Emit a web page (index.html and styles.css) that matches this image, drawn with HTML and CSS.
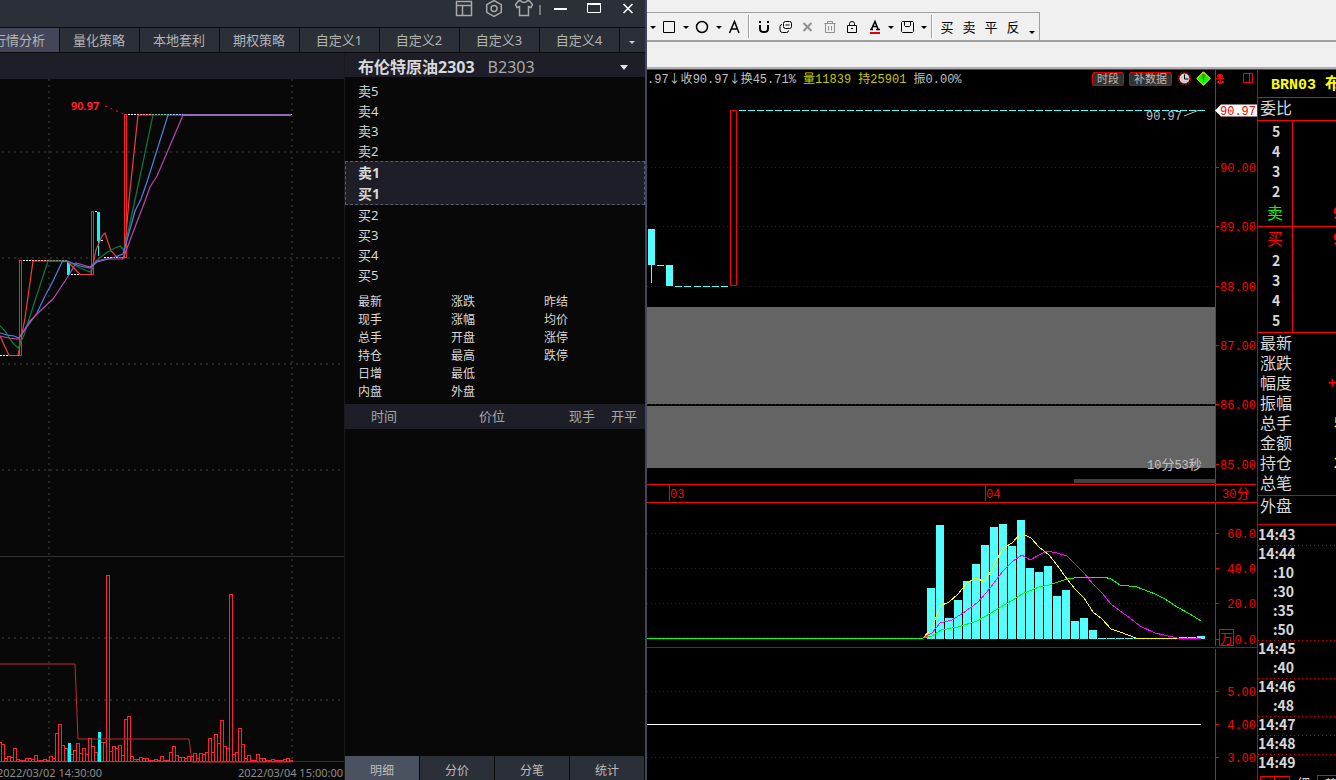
FILE: index.html
```html
<!DOCTYPE html>
<html lang="zh-CN">
<head>
<meta charset="utf-8">
<title>布伦特原油2303</title>
<link rel="stylesheet" href="styles.css">
</head>
<body>
<div class="desktop">
  <section class="trader">
    <header class="titlebar">
      <button class="tool" aria-label="布局"><svg width="20" height="20" viewBox="0 0 20 20"><path d="M2.500 1.500h15v14h-15zM2.500 5.500h15M8.500 5.500v10"/></svg></button>
      <button class="tool" aria-label="设置"><svg width="20" height="20" viewBox="0 0 20 20"><path d="M10 .5l7.300 4.200v7.600L10 16.500l-7.300-4.200V4.700z"/><circle cx="10" cy="8.500" r="3"/></svg></button>
      <button class="tool" aria-label="皮肤"><svg width="20" height="20" viewBox="0 0 20 20"><path d="M6.500 .5c1 2.500 6 2.500 7 0l2 .5 3 3.500-1.500 3-2.500-1v9h-9v-9l-2.500 1-1.500-3 3-3.500z"/></svg></button>
      <span class="tool-sep"></span>
      <button class="win" aria-label="最小化"><svg width="20" height="20" viewBox="0 0 20 20"><path d="M4 9h13"/></svg></button>
      <button class="win" aria-label="最大化"><svg width="20" height="20" viewBox="0 0 20 20"><path class="thin" d="M3.500 4v8.500h13V4"/><path d="M3 4h14"/></svg></button>
      <button class="win" aria-label="关闭"><svg width="20" height="20" viewBox="0 0 20 20"><path class="cross" d="M5.500 4l9 9M14.500 4l-9 9"/></svg></button>
    </header>
    <nav class="tabs">
      <button class="tab first active">行情分析</button><button class="tab">量化策略</button><button class="tab">本地套利</button><button class="tab">期权策略</button><button class="tab">自定义1</button><button class="tab">自定义2</button><button class="tab">自定义3</button><button class="tab">自定义4</button><button class="tab more" aria-label="更多"><i class="caret"></i></button>
    </nav>
    <div class="trader-body">
      <div class="kline">
        <div class="kline-head"></div>
        <svg class="plot" viewBox="0 79 344 701" preserveAspectRatio="xMaxYMin meet">
          <g class="grid-left">
            <path d="M49 79V761M292 79V761"/>
            <path d="M2 152H341M2 258H341M2 364H341M2 470H341M2 638H341M2 700H341"/>
          </g>
          <g class="candles">
            <rect x="19.500" y="260.500" width="2" height="95"/>
            <rect x="91.500" y="211.500" width="2" height="63"/>
            <rect x="124.500" y="114.500" width="2" height="143"/>
          </g>
          <path class="cyan-fill" d="M67 262h3v13h-3zM97 212h3v29h-3zM98 241h1v15h-1z"/>
          <path class="white-dash" d="M0 355.500H19M23 260.500H67M71 274.500H91M95 211.500h2M101 240.500h2M104 257.500h20M128 114.500H292"/>
          <g class="ma">
            <polyline class="ma-red" points="0,336 9,355.500 18,355.500 25,318 33,261 67,261 75,269 80,274.500 91,274.500 96,250 102,236 105,233 111,251 117,257 124,258 129,200 138,115 153,115"/>
            <polyline class="ma-green" points="0,326 5,331 12,342 18,348 24,335 30,316 48,261 67,261 80,268 90,272 96,261 106,253 115,248 120,246 124,250 135,200 153,115 168,115"/>
            <polyline class="ma-blue" points="0,333 7,335 14,336 19,338 24,331 37,313 44,298 53,281 62,262 67,261 80,266 90,268 97,262 105,260 115,257 123,254 129,233 135,211 141,199 147,182 168,115 183,115"/>
            <polyline class="ma-purple" points="0,336 9,338 18,339 23,332 30,321 39,312 53,299 63,284 69,275 76,263 90,267 97,261 105,259 123,259 132,235 145,201 150,187 157,176 163,162 183,115"/>
          </g>
          <path class="ma-flat" d="M183 115H291"/>
          <path class="pointer-red" d="M105 106L124 114"/>
          <text class="peak" x="71" y="110">90.97</text>
          <path class="pane-line" d="M0 556.500H344M0 761.500H344"/>
          <g id="volume-left"></g>
          <polyline class="interest" points="0,664 75,664 78,739 189,739 192,762 291,762"/>
          <text class="date" x="-3" y="777">2022/03/02 14:30:00</text>
          <text class="date" x="343" y="777" text-anchor="end">2022/03/04 15:00:00</text>
        </svg>
      </div>
      <aside class="quote">
        <div class="quote-head"><strong>布伦特原油2303</strong><span>B2303</span><i class="caret big"></i></div>
        <div class="ladder">
          <div>卖5</div><div>卖4</div><div>卖3</div><div>卖2</div>
          <div class="best"><div>卖1</div><div>买1</div></div>
          <div>买2</div><div>买3</div><div>买4</div><div>买5</div>
        </div>
        <div class="stats">
          <span>最新</span><span>涨跌</span><span>昨结</span>
          <span>现手</span><span>涨幅</span><span>均价</span>
          <span>总手</span><span>开盘</span><span>涨停</span>
          <span>持仓</span><span>最高</span><span>跌停</span>
          <span>日增</span><span>最低</span><span></span>
          <span>内盘</span><span>外盘</span><span></span>
        </div>
        <table class="deals"><thead><tr><th class="c-time">时间</th><th class="c-price">价位</th><th class="c-vol">现手</th><th class="c-side">开平</th></tr></thead></table>
        <nav class="subtabs"><button class="active">明细</button><button>分价</button><button>分笔</button><button>统计</button></nav>
      </aside>
    </div>
  </section>

  <section class="station">
    <div class="menu-strip"></div>
    <div class="toolbar-row">
      <div class="toolbar">
        <button class="drop" aria-label="线条"><i class="caret dark"></i></button>
        <button class="ico" aria-label="矩形"><svg width="20" height="20" viewBox="0 0 20 20"><path d="M4.500 4.500h11v11h-11z"/></svg></button>
        <button class="drop" aria-label="更多矩形"><i class="caret dark"></i></button>
        <button class="ico" aria-label="圆形"><svg width="20" height="20" viewBox="0 0 20 20"><circle cx="10" cy="10" r="5.500" stroke-width="1.500"/></svg></button>
        <button class="drop" aria-label="更多圆形"><i class="caret dark"></i></button>
        <button class="ico" aria-label="文字"><svg width="20" height="20" viewBox="0 0 20 20"><path stroke-width="1.500" d="M4.500 16L9.500 4.500 14 16M6 12h7"/></svg></button>
        <span class="bar"></span>
        <button class="ico" aria-label="磁吸"><svg width="20" height="20" viewBox="0 0 20 20"><path stroke-width="2" d="M6 4v2M14 4v2M6 8v4q0 3 4 3t4-3V8"/></svg></button>
        <button class="ico" aria-label="复制"><svg width="20" height="20" viewBox="0 0 20 20"><path d="M7.500 6.500q0-2 2-2h4q2 0 2 2v3q0 2-2 2h-4q-2 0-2-2zM9.500 8h4M6 7.500q-2 0-2 2v3.500q0 2.500 2.500 2.500h4q2 0 2-2"/></svg></button>
        <button class="ico dim" aria-label="删除"><svg width="20" height="20" viewBox="0 0 20 20"><path stroke-width="2" d="M5.500 6l8 8M13.500 6l-8 8"/></svg></button>
        <button class="ico dim" aria-label="清空"><svg width="20" height="20" viewBox="0 0 20 20"><path d="M4.500 6.500h11M7.500 6V4.500h5V6M5.500 7v8.500h9V7M8.500 9v4.500M11.500 9v4.500"/></svg></button>
        <button class="ico" aria-label="锁定"><svg width="20" height="20" viewBox="0 0 20 20"><path d="M5.500 8.500h9v7h-9zM7.500 8V6.500q0-2 2.500-2t2.500 2V8M9 11.500h2"/></svg></button>
        <button class="ico" aria-label="字体颜色"><svg width="20" height="20" viewBox="0 0 20 20"><path d="M6 12.500h3M12 12.500h4M7.500 12L11 4.500 14 12M8.500 9.500h4.500" stroke-width="1.500"/><path class="underline" d="M6 16h10"/></svg></button>
        <button class="drop" aria-label="更多颜色"><i class="caret dark"></i></button>
        <button class="ico" aria-label="保存"><svg width="20" height="20" viewBox="0 0 20 20"><path d="M5.500 4.500h10l1 1v9l-1 1h-10l-1-1v-9zM7.500 5v3.500l1 1h4l1-1V5"/></svg></button>
        <button class="drop" aria-label="更多保存"><i class="caret dark"></i></button>
        <span class="bar"></span>
        <button class="ico word">买</button><button class="ico word">卖</button><button class="ico word">平</button><button class="ico word">反</button>
        <button class="drop low" aria-label="更多"><i class="caret dark"></i></button>
      </div>
    </div>
    <div class="address-strip"></div>
    <div class="station-body">
      <div class="chart">
        <div class="chart-head">
          <p class="ohlc">.97<b>↓收</b>90.97<b>↓换</b>45.71% <em><b>量</b>11839 <b>持</b>25901</em> <b>振</b>0.00%</p>
          <button class="badge">时段</button><button class="badge">补数据</button>
          <svg class="clock" width="15" height="15" viewBox="0 0 15 15"><circle class="ring" cx="7.500" cy="7.500" r="5.500"/><circle class="face" cx="7.500" cy="7.500" r="5"/><path d="M7.500 3.500v4.500h4"/></svg>
          <svg class="gem" width="15" height="15" viewBox="0 0 15 15"><path class="gem-face" d="M7.500 .8l6.700 6.700-6.700 6.700L.8 7.500z"/><path class="gem-pin" d="M7.500 3v8M6 4h3v3H6z"/></svg>
          <div class="axis-head">
            <svg width="10" height="12" viewBox="0 0 10 12"><path class="red-fill" d="M2 1h4v1h1v2H5v1h3v1H5v3h1V8h2v2H6v1H3v-1H1V8h2v1h1V6H0V5h3V4H1V2h1z"/></svg>
            <svg width="12" height="14" viewBox="0 0 12 14"><path class="red-line" d="M1.500 1.500h9v9h-9zM7.500 1.500v9"/></svg>
          </div>
        </div>
        <svg class="plot" viewBox="647 87 610 693" preserveAspectRatio="xMaxYMin meet">
          <path class="grid-right" d="M647 167.500H1215M647 226.500H1215M647 286.500H1215M647 533.500H1215M647 568.500H1215M647 603.500H1215M647 639.500H1215M647 691.500H1215M647 757.500H1215"/>
          <path class="shade" d="M647 307H1215V404H647zM647 406H1215V468H647z"/>
          <path class="grid-right" d="M647 404.500H1215"/>
          <path class="scroll" d="M1074 479h141v4h-141z"/>
          <path class="cyan2" d="M648 229h7v36h-7zM651 265h1v18h-1zM657 265h7v1h-7zM666 265h7v21h-7zM675 286h7v1h-7zM684 286h7v1h-7zM694 286h7v1h-7zM703 286h7v1h-7zM712 286h7v1h-7zM721 286h7v1h-7z"/>
          <path class="cyan-dash" d="M739 110.500H1205"/>
          <path class="red-line" d="M730.500 110.500h6v175h-6zM647 484.500H1256M647 502.500H1257M669.500 485V501M985.500 485V501M1215.500 87V501M1215.500 503V646M1215.500 649V780M1216 167.500h3M1216 226.500h3M1216 286.500h3M1216 345.500h3M1216 404.500h3M1216 464.500h3M1216 533.500h3M1216 568.500h3M1216 603.500h3M1216 639.500h3M1216 691.500h3M1216 724.500h3M1216 757.500h3M1219.500 629.500h14v16h-14z"/>
          <path class="red-line deep" d="M647 647.500H1257"/>
          <path class="tag" d="M1215 110.500l6-6h36v12h-36z"/>
          <path class="pointer-gray" d="M1184 116L1198 110.500"/>
          <g class="scale" text-anchor="end">
            <text x="1256" y="115">90.97</text><text x="1256" y="172">90.00</text><text x="1256" y="231">89.00</text><text x="1256" y="291">88.00</text><text x="1256" y="350">87.00</text><text x="1256" y="409">86.00</text><text x="1256" y="469">85.00</text>
            <text x="1256" y="538">60.0</text><text x="1256" y="573">40.0</text><text x="1256" y="608">20.0</text><text x="1256" y="644">0.0</text>
            <text x="1256" y="696">5.00</text><text x="1256" y="729">4.00</text><text x="1256" y="762">3.00</text>
          </g>
          <g class="scale"><text x="670" y="498">03</text><text x="986" y="498">04</text><text x="1222" y="498">30<tspan class="han">分</tspan></text><text class="han" x="1220" y="643">万</text></g>
          <g class="note"><text x="1146" y="120">90.97</text><text x="1147" y="469">10<tspan class="han">分</tspan>53<tspan class="han">秒</tspan></text></g>
          <g id="volume-right"></g>
          <g class="curves">
            <polyline class="yellow" points="923,638 932,628 940,606 949,602 958,594 967,583 976,578 985,582 994,565 1003,548 1012,543 1021,533 1031,538 1039,547 1049,555 1057,565 1067,579 1075,589 1084,598 1093,612 1102,619 1111,629 1120,632 1136,638 1201,638"/>
            <polyline class="magenta" points="923,638 932,633 940,623 952,620 963,613 977,603 986,593 994,583 1003,571 1013,561 1022,555 1030,560 1039,555 1047,551 1057,553 1067,556 1075,564 1084,573 1093,584 1102,593 1111,604 1120,611 1130,618 1140,626 1155,633 1177,638 1201,638"/>
            <polyline class="green" points="647,638 923,638 932,636 941,630 958,627 977,621 986,616 994,611 1013,600 1022,594 1039,587 1049,585 1067,579 1082,577 1104,577 1111,579 1120,585 1137,587 1155,594 1165,599 1177,607 1190,614 1201,621"/>
          </g>
          <path class="white-line" d="M647 724.500H1201"/>
        </svg>
      </div>
      <aside class="depth">
        <div class="symbol">BRN03 <b>布伦特</b></div>
        <div class="ratio">委比</div>
        <div class="levels ask"><div>5</div><div>4</div><div>3</div><div>2</div><div class="mark"><b>卖</b><span>90</span></div></div>
        <div class="levels bid"><div class="mark"><b>买</b><span>90</span></div><div>2</div><div>3</div><div>4</div><div>5</div></div>
        <div class="facts"><div>最新</div><div>涨跌</div><div>幅度<span class="up">+</span></div><div>振幅</div><div>总手<span class="vol">5</span></div><div>金额</div><div>持仓<span class="vol">2</span></div><div>总笔</div></div>
        <div class="outer">外盘</div>
        <div class="ticks"><div class="end">14:43</div><div>14:44</div><div>:10</div><div>:30</div><div>:35</div><div class="end">:50</div><div>14:45</div><div class="end">:40</div><div>14:46</div><div class="end">:48</div><div class="end">14:47</div><div class="end">14:48</div><div>14:49</div></div>
        <div class="pager"><button class="arrows" aria-label="翻页"><svg width="30" height="14" viewBox="0 0 30 14"><path class="red-line" d="M.5 .5h29v13H.5zM14.500 0v14"/><path class="red-fill" d="M11 3v8L6 7zM19 3v8l5-4z"/></svg></button><button>细</button><button class="slant">势</button></div>
      </aside>
    </div>
  </section>
</div>
<script src="charts.js"></script>
</body>
</html>
```
FILE: styles.css
```css
* { box-sizing: border-box; }
body { margin: 0; background: #000; font-family: "Noto Sans", "Noto Sans CJK SC", sans-serif; font-size: 13px; color: #d8d8d8; }
button { margin: 0; padding: 0; border: 0; background: none; color: inherit; font: inherit; }
svg { display: block; fill: none; }
p { margin: 0; }
.desktop { display: grid; grid-template-columns: 647fr 689fr; height: 100vh; overflow: hidden; }

/* left window */
.trader { display: flex; flex-direction: column; min-width: 0; min-height: 0; overflow: hidden; border-right: 2px solid #45455a; background: #080808; }
.titlebar { display: flex; justify-content: flex-end; align-items: flex-start; height: 27px; background: #2b2f38; }
.tool { width: 30px; display: flex; justify-content: center; }
.tool svg { stroke: #a8a8a8; stroke-width: 1.5; }
.tool-sep { width: 2px; height: 10px; margin: 5px 2px 0 0; background: #777; }
.win { width: 34px; display: flex; justify-content: center; }
.win svg { stroke: #fff; stroke-width: 2; }
.win .thin { stroke-width: 1; }
.win .cross { stroke-width: 1.5; }
.tabs { display: flex; justify-content: flex-end; gap: 1px; height: 26px; padding: 1px 0; background: #0c0c0e; }
.tab { flex: 0 0 79px; height: 24px; padding-right: 1px; background: #2b2f38; color: #b4b4b4; font-size: 13px; line-height: 24px; white-space: nowrap; }
.tab.active { background: #45455a; }
.tab.more { flex: 0 0 25px; display: flex; align-items: center; justify-content: center; padding-top: 4px; }
.caret { display: block; width: 0; height: 0; border: 3px solid transparent; border-top-color: #ccc; border-bottom: 0; }
.caret.big { border-width: 5px 4px 0; border-top-color: #e4e4e4; margin-left: auto; }
.caret.dark { border-top-color: #000; }
.trader-body { flex: 1; display: flex; min-height: 0; }
.kline { flex: 1; min-width: 0; display: flex; flex-direction: column; border-right: 1px solid #1a1a1e; }
.kline-head { height: 26px; background: #1e1e28; }
.plot { flex: 1; width: 100%; min-height: 0; }
.quote { width: 300px; display: flex; flex-direction: column; }
.quote-head { display: flex; align-items: center; gap: 13px; height: 24px; padding: 4px 17px 0 13px; background: #1e1e28; font-size: 16px; line-height: 20px; white-space: nowrap; }
.quote-head span { color: #a8a8a8; }
.ladder { padding-top: 4px; line-height: 20px; }
.ladder > div { padding-left: 13px; }
.ladder .best { height: 44px; padding-left: 12px; border: 1px dashed #5c5c6c; background: #1e1e28; font-weight: bold; font-size: 14px; line-height: 21px; }
.stats { display: grid; grid-template-columns: repeat(3, 93px); padding: 8px 0 3px 13px; font-size: 12px; line-height: 18px; min-height: 119px; }
.deals { width: 100%; border-collapse: collapse; table-layout: fixed; background: #1e1e28; color: #a8a8a8; }
.deals th { height: 25px; padding: 0; text-align: left; font-weight: normal; line-height: 25px; }
.deals .c-time { width: 134px; padding-left: 26px; }
.deals .c-price { width: 90px; }
.deals .c-vol { width: 42px; }
.subtabs { display: grid; grid-template-columns: repeat(4, 1fr); gap: 1px; height: 24px; margin-top: auto; padding-right: 1px; }
.subtabs button { padding-top: 3px; background: #2b2f38; color: #bcbcbc; font-size: 12px; }
.subtabs .active { background: #4a5260; }

.grid-left { stroke: #262626; stroke-width: 2; stroke-dasharray: 2 4; }
.candles { stroke: #ff2030; fill: #080808; shape-rendering: crispEdges; }
.cyan-fill { fill: #0ff; }
.white-dash { stroke: #fff; stroke-dasharray: 2 1; }
.ma { stroke-width: 1.2; }
.ma-red { stroke: #f0403c; }
.ma-green { stroke: #0c7c3c; }
.ma-blue { stroke: #4c84e4; }
.ma-purple { stroke: #b848b0; }
.ma-flat { stroke: #9868b8; stroke-width: 2; }
.pointer-red { stroke: #ff2030; stroke-dasharray: 2 4; }
.peak { fill: #ff2030; font-size: 11px; font-weight: bold; }
.pane-line { stroke: #333; }
.interest { stroke: #c02c30; }
.date { fill: #8c8c8c; font-size: 11px; }
.vol-up { fill: #080808; stroke: #ff2030; shape-rendering: crispEdges; }
.vol-down { fill: #0ff; }

/* right window */
.station { display: flex; flex-direction: column; min-width: 0; min-height: 0; overflow: hidden; background: #f0f0f0; }
.menu-strip { height: 12px; }
.toolbar-row { height: 30px; border-bottom: 2px solid #a0a0a0; }
.toolbar { display: inline-flex; height: 28px; border-top: 1px solid #a0a0a0; border-right: 1px solid #a0a0a0; }
.toolbar button { display: flex; align-items: center; justify-content: center; height: 28px; color: #000; }
.toolbar svg { stroke: #000; }
.toolbar .dim svg { stroke: #909090; }
.toolbar .underline { stroke: #e00000; stroke-width: 2; }
.toolbar .word { padding-bottom: 2px; font-size: 13px; }
.drop { width: 11px; }
.toolbar .low { width: 15px; padding-top: 10px; }
.ico { width: 22px; }
.bar { width: 7px; height: 23px; margin-top: 2px; background: linear-gradient(90deg, transparent 2px, #a0a0a0 2px, #a0a0a0 3px, #fff 3px, #fff 4px, transparent 4px); }
.address-strip { height: 28px; border-bottom: 1px solid #f00; box-shadow: inset 0 -2px 0 #b0b0b0; }
.station-body { flex: 1; display: flex; min-height: 0; background: #000; }
.chart { flex: 1; min-width: 0; display: flex; flex-direction: column; }
.chart-head { display: flex; align-items: center; height: 17px; }
.ohlc { margin-right: auto; color: #c0c0c0; font: 12px/17px "Liberation Mono", "Noto Sans CJK SC", monospace; white-space: nowrap; }
.ohlc b { font: 12px/17px "Noto Sans CJK SC", sans-serif; }
.ohlc em { color: #c8c800; font-style: normal; }
.badge { height: 14px; margin-right: 5px; padding: 0 4px; border: 1px solid #e00000; border-radius: 2px; background: #333; color: #b8b8b8; font-size: 11px; line-height: 12px; white-space: nowrap; }
.clock .ring { stroke: #900000; stroke-width: 3; stroke-dasharray: 2 1; }
.clock .face { fill: #d0d0d0; }
.clock path { stroke: #000; }
.gem { margin: 0 4px; }
.gem-face { fill: #0f0; stroke: #ff0; }
.gem-pin { stroke: #6c7800; }
.axis-head { display: flex; justify-content: space-between; align-items: center; width: 42px; height: 17px; padding-right: 3px; border-left: 1px solid #f00; }
.red-fill { fill: #f00; }
.red-line { stroke: #f00; }
.deep { stroke: #c00000; }
.grid-right { stroke: #700000; stroke-dasharray: 1 3; }
.shade { fill: #646464; }
.scroll { fill: #404040; }
.cyan2 { fill: #54ffff; }
.cyan-dash { stroke: #54ffff; stroke-dasharray: 7 2; }
.tag { fill: #fff; }
.pointer-gray { stroke: #c0c0c0; }
.scale { fill: #f00; font: 12px "Liberation Mono", monospace; }
.note { fill: #c0c0c0; font: 12px "Liberation Mono", monospace; }
.han { font: 13px "Noto Sans CJK SC", sans-serif; }
.curves { stroke-width: 1; shape-rendering: crispEdges; }
.yellow { stroke: #ff0; }
.magenta { stroke: #f0f; }
.green { stroke: #0f0; }
.white-line { stroke: #fff; }

.depth { width: 79px; overflow: hidden; border-left: 1px solid #d00000; font-family: "Noto Sans CJK SC", sans-serif; white-space: nowrap; color: #d8d8d8; }
.symbol { height: 28px; padding-left: 13px; border-bottom: 1px solid #f00; color: #ff0; font: bold 15px/24px "Liberation Mono", monospace; }
.symbol b { font: bold 16px/24px "Noto Sans CJK SC", sans-serif; }
.ratio { height: 23px; padding-left: 2px; border-bottom: 1px solid #f00; font-size: 16px; line-height: 19px; }
.levels { border-bottom: 1px solid #f00; background: linear-gradient(90deg, transparent 34px, #f00 34px, #f00 35px, transparent 35px); font-size: 14px; font-weight: bold; line-height: 20px; }
.levels > div { padding-left: 14px; }
.levels .mark { display: flex; gap: 50px; padding-left: 9px; font-size: 16px; line-height: 23px; color: #f00; }
.mark b { font-weight: normal; }
.ask .mark b { color: #0f0; }
.ask { height: 106px; }
.bid { height: 106px; }
.facts { height: 163px; border-bottom: 1px solid #d00000; padding-left: 2px; font-size: 16px; line-height: 18px; }
.facts > div { display: flex; justify-content: space-between; height: 20px; }
.facts span { width: 2px; font-size: 14px; font-weight: bold; }
.facts .up { width: 8px; color: #f00; }
.facts .vol { color: #ff0; }
.outer { height: 29px; padding-left: 2px; border-bottom: 1px solid #d00000; font-size: 16px; line-height: 19px; }
.ticks { padding-top: 2px; }
.ticks > div { width: 78px; height: 19px; padding-right: 42px; text-align: right; font-size: 14px; font-weight: bold; line-height: 15px; }
.ticks .end { background: repeating-linear-gradient(90deg, #d00000 0, #d00000 1px, transparent 1px, transparent 4px) 0 100% / 100% 1px no-repeat; }
.pager { display: flex; gap: 7px; padding: 1px 0 0 2px; font-size: 13px; line-height: 14px; }
.pager button { flex: none; height: 16px; }
.pager .slant { padding-left: 7px; border-top: 1px solid #f00; border-left: 1px solid #f00; }
```
FILE: charts.js
```js
const NS = "http://www.w3.org/2000/svg";

function bar(host, x, y, width, height, name) {
  const rect = document.createElementNS(NS, "rect");
  rect.setAttribute("x", x);
  rect.setAttribute("y", y);
  rect.setAttribute("width", width);
  rect.setAttribute("height", height);
  rect.setAttribute("class", name);
  host.appendChild(rect);
}

// negative values are falling periods
const left = [19,17,3,5,4,13,2,1,1,3,3,2,6,1,1,2,1,5,3,28,37,16,13,-19,7,11,18,8,13,7,23,15,9,-30,19,19,186,
  10,15,13,16,6,42,45,5,2,2,4,3,3,1,1,2,1,5,1,1,9,15,6,4,4,3,5,5,8,3,8,7,9,23,9,27,18,41,15,13,167,
  7,9,33,17,3,6,1,1,7,3,3,1,1,2,1,1,1,2,3,1];
const leftHost = document.getElementById("volume-left");
left.forEach((v, i) => {
  if (v > 0) bar(leftHost, 3 * i - 1.5, 761.5 - v, 3, v, "vol-up");
});
left.forEach((v, i) => {
  if (v < 0) bar(leftHost, 3 * i - 1, 762 + v, 3, -v, "vol-down");
});

const right = [51,114,21,39,58,75,94,112,115,93,119,71,67,73,43,49,18,21,9,1,1,1,1,1,0,0,0,0,2,2,3];
const rightHost = document.getElementById("volume-right");
right.forEach((v, i) => bar(rightHost, 927 + 9 * i, 639 - v, 8, v, "cyan2"));
```
